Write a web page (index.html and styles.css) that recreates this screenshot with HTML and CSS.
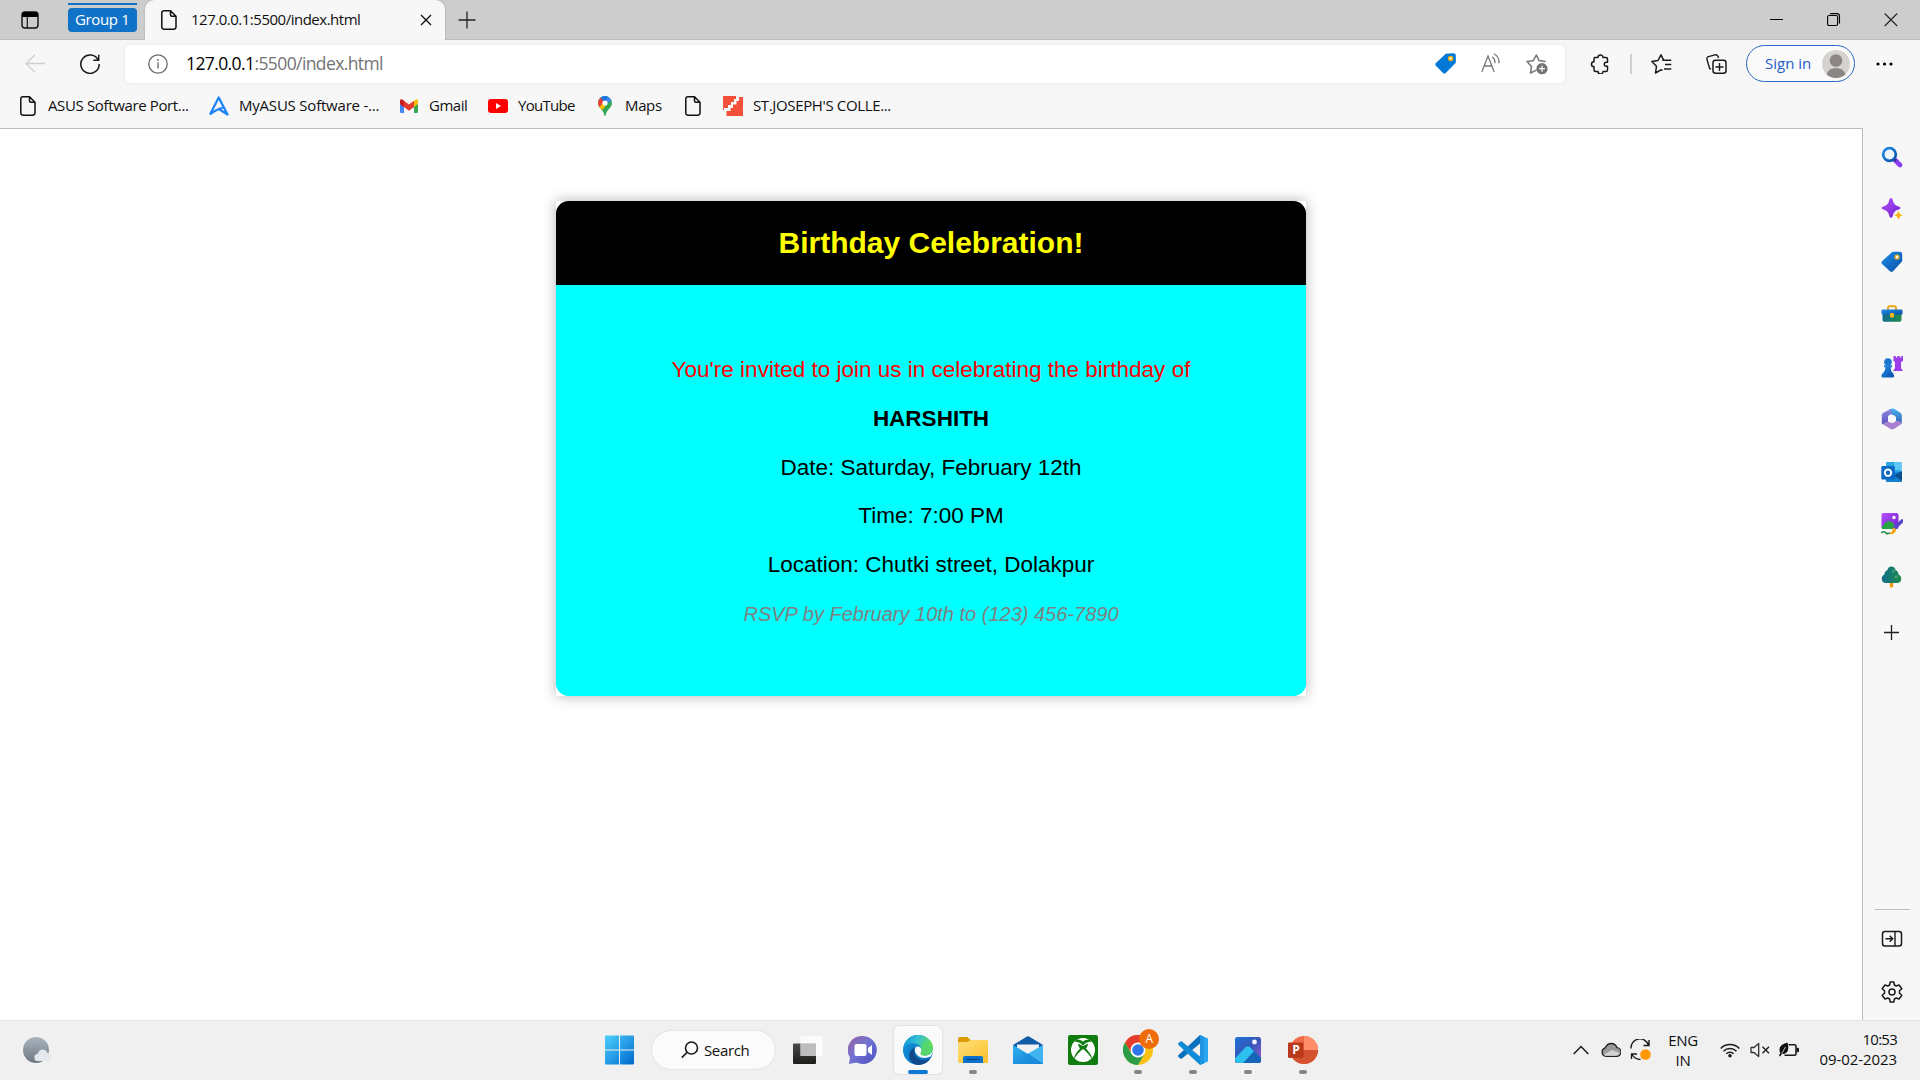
FILE: index.html
```html
<!DOCTYPE html>
<html lang="en">
<head>
<meta charset="utf-8">
<title>127.0.0.1:5500/index.html</title>
<link rel="stylesheet" href="styles.css">
</head>
<body>
<svg width="0" height="0" class="defs" aria-hidden="true">
  <defs>
    <linearGradient id="gBlue" x1="0" y1="0" x2="1" y2="1"><stop offset="0" stop-color="#1f8fe8"/><stop offset="1" stop-color="#0b4ea8"/></linearGradient>
    <linearGradient id="gWin" x1="0" y1="0" x2="1" y2="1"><stop offset="0" stop-color="#4cd0fb"/><stop offset="1" stop-color="#0068cf"/></linearGradient>
    <linearGradient id="gPurple" x1="0" y1="0" x2="1" y2="1"><stop offset="0" stop-color="#b84dff"/><stop offset="1" stop-color="#6a22c9"/></linearGradient>
    <linearGradient id="gChat" x1="0" y1="0" x2="1" y2="1"><stop offset="0" stop-color="#9a62a0"/><stop offset=".45" stop-color="#7473d2"/><stop offset="1" stop-color="#4a4fc0"/></linearGradient>
    <linearGradient id="gDark" x1="0" y1="0" x2="0" y2="1"><stop offset="0" stop-color="#4a4a48"/><stop offset="1" stop-color="#1d1d1b"/></linearGradient>
    <linearGradient id="gEdgeTop" x1="0" y1="0" x2="1" y2=".3"><stop offset="0" stop-color="#0c8fd8"/><stop offset=".5" stop-color="#35c1d2"/><stop offset="1" stop-color="#63df50"/></linearGradient>
    <linearGradient id="gEdgeMid" x1="0" y1="0" x2="1" y2="1"><stop offset="0" stop-color="#1596dc"/><stop offset="1" stop-color="#0669c0"/></linearGradient>
    <linearGradient id="gFolder" x1="0" y1="0" x2="1" y2="1"><stop offset="0" stop-color="#ffe07a"/><stop offset="1" stop-color="#fbbf2a"/></linearGradient>
    <linearGradient id="gMail" x1="0" y1="0" x2="1" y2="1"><stop offset="0" stop-color="#2fb3f0"/><stop offset="1" stop-color="#1477cf"/></linearGradient>
    <linearGradient id="gPhoto" x1="0" y1="0" x2="1" y2="1"><stop offset="0" stop-color="#1a74d4"/><stop offset=".5" stop-color="#3a55b8"/><stop offset="1" stop-color="#9a5ccb"/></linearGradient>
    <linearGradient id="gMoon" x1="0" y1="0" x2="0" y2="1"><stop offset="0" stop-color="#a9b4be"/><stop offset="1" stop-color="#6f7882"/></linearGradient>
    <linearGradient id="gTree" x1="0" y1="0" x2="1" y2="0"><stop offset="0" stop-color="#0d6c8c"/><stop offset="1" stop-color="#218c4c"/></linearGradient>
    <linearGradient id="gOfficeR" x1="0" y1="0" x2="0" y2="1"><stop offset="0" stop-color="#4fb4f0"/><stop offset="1" stop-color="#2a5fae"/></linearGradient>
    <linearGradient id="gOfficeL" x1="0" y1="0" x2="0" y2="1"><stop offset="0" stop-color="#8f8ae0"/><stop offset="1" stop-color="#5b52bd"/></linearGradient>
  </defs>
</svg>

<header class="titlebar">
  <svg class="tab-actions" width="20" height="20" viewBox="0 0 20 20"><rect x="1" y="2" width="16" height="16" rx="3" fill="none" stroke="#111" stroke-width="1.4"/><path d="M1 7V5a3 3 0 0 1 3-3h10a3 3 0 0 1 3 3v2z" fill="#000"/><path d="M6.3 7v11" stroke="#111" stroke-width="1.2"/></svg>
  <div class="group"><span class="group-label">Group 1</span></div>
  <div class="tab">
    <svg width="16" height="20" viewBox="0 0 16 20"><path d="M3 .8h6.500L15 6.200V17a2.200 2.200 0 0 1-2.200 2.200H3A2.200 2.200 0 0 1 .8 17V3A2.200 2.200 0 0 1 3 .8zM9.500.8v4a1.500 1.500 0 0 0 1.500 1.500h4" fill="none" stroke="#111" stroke-width="1.500"/></svg>
    <span class="tab-title">127.0.0.1:5500/index.html</span>
    <svg class="tab-close" width="12" height="12" viewBox="0 0 12 12"><path d="M1 1l10 10M11 1L1 11" stroke="#111" stroke-width="1.4"/></svg>
  </div>
  <svg class="new-tab" width="18" height="18" viewBox="0 0 18 18"><path d="M9 .5v17M.5 9h17" stroke="#222" stroke-width="1.3"/></svg>
  <div class="window-controls">
    <svg width="14" height="14" viewBox="0 0 14 14"><path d="M0 6.500h13" stroke="#000"/></svg>
    <svg width="14" height="14" viewBox="0 0 14 14"><rect x=".6" y="2.500" width="10" height="10" rx="1.500" fill="none" stroke="#000" stroke-width="1.100"/><path d="M3 .6h7A2.500 2.500 0 0 1 12.500 3v7.500" fill="none" stroke="#000" stroke-width="1.100"/></svg>
    <svg width="14" height="14" viewBox="0 0 14 14"><path d="M.7.5l12.500 12.500M13.200.5L.7 13" stroke="#222" stroke-width="1.100"/></svg>
  </div>
</header>

<nav class="toolbar">
  <svg class="back" width="20" height="20" viewBox="0 0 20 20"><path d="M20 9.500H1M10 .8L1 9.500l9 8.700" fill="none" stroke="#cfcfcf" stroke-width="1.300"/></svg>
  <svg class="reload" width="20" height="20" viewBox="0 0 20 20"><path d="M18.300 6.200A9.200 9.200 0 1 0 19.200 10M18.700.8v5.400h-5.400" fill="none" stroke="#1a1a1a" stroke-width="1.500"/></svg>
  <div class="address">
    <svg width="20" height="20" viewBox="0 0 20 20"><circle cx="10" cy="10" r="9.200" fill="none" stroke="#6a6a6a" stroke-width="1.300"/><path d="M10 8.500v6" stroke="#6a6a6a" stroke-width="1.400"/><circle cx="10" cy="6" r=".9" fill="#6a6a6a"/></svg>
    <span class="url"><b>127.0.0.1</b>:5500/index.html</span>
    <div class="address-actions">
      <svg width="21" height="21" viewBox="0 0 21 21"><path d="M10.800.8 18.500.3Q20.800.3 20.800 2.500V9.800L10.700 19.900Q9.300 21 8 19.900L.9 12.800Q-.4 11.500.9 10z" fill="#0078d7"/><circle cx="15.600" cy="5.600" r="2" fill="#fff3c4" stroke="#f0ae0c" stroke-width="1.500"/></svg>
      <svg width="20" height="20" viewBox="0 0 20 20"><path d="M1 18.500 7 3l6 15.500M3.200 13h7.600M11.500 4.300Q14 6 14 9.500M13.300 1Q18.300 3.700 18 9.800" fill="none" stroke="#777" stroke-width="1.300" stroke-linecap="round"/></svg>
      <svg width="22" height="22" viewBox="0 0 22 22"><path d="M10 17.300 4.500 20l1-6.500L1 8.500l6.200-.8L10.300 2l2.800 5.600 6 .9" fill="none" stroke="#757575" stroke-width="1.500" stroke-linejoin="round" stroke-linecap="round"/><circle cx="16" cy="15.700" r="5.600" fill="#737373"/><path d="M16 12.700v6M13 15.700h6" stroke="#fff" stroke-width="1.300"/></svg>
    </div>
  </div>
  <svg class="extensions" width="20" height="20" viewBox="0 0 20 20"><path d="M4.500 3.500H8a2.500 2.500 0 0 1 5 0h3q1.500 0 1.500 1.500v3.200h-1.200a2 2 0 0 0 0 4h1.200V16q0 1.500-1.500 1.500h-3a2.500 2.500 0 0 1-5 0H5.500Q4 17.500 4 16v-3.300a2.500 2.500 0 0 1 0-5V5z" fill="none" stroke="#1a1a1a" stroke-width="1.500" stroke-linejoin="round"/></svg>
  <i class="divider"></i>
  <svg class="favorites" width="21" height="20" viewBox="0 0 21 20"><path d="M11.300 6.200h9M14 10.500h6.300M13 15h7.300M11.500 16.500 10 15.800 4.500 19l1-6.800L.8 7.500l6.200-1 3-5.700 2.600 5.400" fill="none" stroke="#1a1a1a" stroke-width="1.500" stroke-linejoin="round"/></svg>
  <svg class="collections" width="21" height="21" viewBox="0 0 21 21"><path d="M5 15.200 3.600 14.500 1 5.500a2.200 2.200 0 0 1 1.500-2.800L9 .9q2-.5 3 1.400l.5 1.700" fill="none" stroke="#1a1a1a" stroke-width="1.400"/><rect x="7" y="6.200" width="13" height="13" rx="2.500" fill="none" stroke="#1a1a1a" stroke-width="1.500"/><path d="M13.500 9v8M9.500 13h8" stroke="#1a1a1a" stroke-width="1.400"/></svg>
  <div class="signin"><span>Sign in</span><svg width="28" height="28" viewBox="0 0 28 28"><circle cx="14" cy="14" r="14" fill="#d6d2ce"/><circle cx="14" cy="10.500" r="6.300" fill="#8b8683"/><path d="M4.500 24.200Q7 18 14 18t9.500 6.200A14 14 0 0 1 4.500 24.200z" fill="#8b8683"/></svg></div>
  <svg class="more" width="18" height="4" viewBox="0 0 18 4"><circle cx="2" cy="2" r="1.600"/><circle cx="8.500" cy="2" r="1.600"/><circle cx="15" cy="2" r="1.600"/></svg>
</nav>

<nav class="bookmarks">
  <a class="bm bm-asus"><svg width="16" height="20" viewBox="0 0 16 20"><path d="M3 .8h6.500L15 6.200V17a2.200 2.200 0 0 1-2.200 2.200H3A2.200 2.200 0 0 1 .8 17V3A2.200 2.200 0 0 1 3 .8zM9.500.8v4a1.500 1.500 0 0 0 1.500 1.500h4" fill="none" stroke="#111" stroke-width="1.500"/></svg><span>ASUS Software Port...</span></a>
  <a class="bm bm-my"><svg width="20" height="20" viewBox="0 0 20 20"><path d="M1 18.500 9.700 1.500 18.500 18.500 9 12.500M1 18.500Q6 14 14 11.500" fill="none" stroke="#1f86f8" stroke-width="2.300" stroke-linejoin="round"/></svg><span>MyASUS Software -...</span></a>
  <a class="bm bm-gmail"><svg width="18" height="14" viewBox="0 0 18 14"><path d="M0 2.500 4 5v9H1.200Q0 14 0 12.800z" fill="#4285f4"/><path d="M18 2.500 14 5v9h2.800q1.200 0 1.200-1.200z" fill="#34a853"/><path d="M14 2 16 .4Q18 0 18 2v3l-4 3z" fill="#fbbc04"/><path d="M0 2Q0-.2 2.300.5L9 5.500 14 1.800V8L9 11.700 4 8 0 5z" fill="#e33b2e"/><path d="M0 2v3l4 3V2L2 .5Q0 .2 0 2z" fill="#c5221f"/></svg><span>Gmail</span></a>
  <a class="bm bm-yt"><svg width="20" height="14" viewBox="0 0 20 14"><rect width="20" height="14" rx="3" fill="#f00"/><path d="M8 4l5 3-5 3z" fill="#fff"/></svg><span>YouTube</span></a>
  <a class="bm bm-maps"><svg width="14" height="20" viewBox="0 0 14 20"><clipPath id="pin"><path d="M7 0a7 7 0 0 1 7 7c0 5-5.500 6.500-6.200 12q-.8 2-1.600 0C5.500 13.500 0 12 0 7a7 7 0 0 1 7-7z"/></clipPath><g clip-path="url(#pin)"><path d="M0 0h14v20H0z" fill="#34a853"/><path d="M0 5 7 7 12-1H2z" fill="#1a73e8"/><path d="M10 0 14 5 7 8z" fill="#4285f4"/><path d="M-1 4 2.500 1.500 7 7 1.500 11-1 9z" fill="#ea4335"/><path d="M1 11.500 7 5v6l-4 4z" fill="#fbbc04"/></g><circle cx="7" cy="7" r="2.600" fill="#fff"/></svg><span>Maps</span></a>
  <a class="bm bm-page"><svg width="16" height="20" viewBox="0 0 16 20"><path d="M3 .8h6.500L15 6.200V17a2.200 2.200 0 0 1-2.200 2.200H3A2.200 2.200 0 0 1 .8 17V3A2.200 2.200 0 0 1 3 .8zM9.500.8v4a1.500 1.500 0 0 0 1.500 1.500h4" fill="none" stroke="#111" stroke-width="1.500"/></svg></a>
  <a class="bm bm-st"><svg width="20" height="20" viewBox="0 0 20 20"><path d="M0 0h20v20H0z" fill="#f5503a"/><path d="M0 16.500V14h1v-2h4V9h3V6h3V3h2V0h7v1h-4v4h-2.500v3.500H10v3.500H7.500v3H3.500v5H0z" fill="#f7f7f7"/></svg><span>ST.JOSEPH'S COLLE...</span></a>
</nav>

<div class="window-body">
  <main class="page">
    <section class="card">
      <h1 class="card-title">Birthday Celebration!</h1>
      <div class="card-body">
        <p class="invite">You're invited to join us in celebrating the birthday of</p>
        <p class="name">HARSHITH</p>
        <p>Date: Saturday, February 12th</p>
        <p>Time: 7:00 PM</p>
        <p>Location: Chutki street, Dolakpur</p>
        <p class="rsvp">RSVP by February 10th to (123) 456-7890</p>
      </div>
    </section>
  </main>
  <aside class="sidebar">
    <svg viewBox="0 0 22 22"><path d="M13.500 13.500 19 19" stroke="#8a3ff0" stroke-width="4.600" stroke-linecap="round"/><path d="M12.500 12.500 15 15" stroke="#4a2a80" stroke-width="3"/><circle cx="8.500" cy="8.500" r="6.300" fill="#eef6fd" stroke="url(#gBlue)" stroke-width="2.700"/></svg>
    <svg viewBox="0 0 22 22"><path d="M10 0q1.500 0 2 3 .8 4 5 5.300 2.500.7 2.500 1.700t-2.500 1.700Q12.800 13 12 17q-.5 3-2 3t-2-3Q7.200 13 3 11.700.5 11 .5 10T3 8.300Q7.200 7 8 3q.5-3 2-3z" fill="url(#gPurple)"/><path d="M17.500 12.500q.8 4 4.500 4.800-3.700.8-4.500 4.700-.8-3.900-4.500-4.700 3.700-.8 4.500-4.800z" fill="#f9b417"/></svg>
    <svg viewBox="0 0 22 22"><path d="M11.500.8h7.200q2.500 0 2.500 2.500v7L12 20.300q-1.500 1.500-3 0L1 13q-1-1.300.2-3z" fill="url(#gBlue)"/><circle cx="16" cy="6" r="1.900" fill="#fff" stroke="#f2b61c" stroke-width="1.400"/></svg>
    <svg viewBox="0 0 22 22"><path d="M7 7V4.800q0-1.600 1.600-1.600h4.800q1.600 0 1.600 1.600V7" fill="none" stroke="#eba81a" stroke-width="2"/><path d="M1.500 9h19v8q0 1.800-1.800 1.800H3.300q-1.800 0-1.800-1.800z" fill="url(#gTree)"/><rect x=".5" y="6.500" width="21" height="5" rx="1" fill="url(#gBlue)"/><rect x="9" y="10" width="4" height="4.500" rx="1" fill="#f2b722"/></svg>
    <svg viewBox="0 0 22 22"><path d="M12.500 0h2.300v1.600h1.600V0h2.400v1.600h1.500V0H22v5l-2 1v6l2 3H12l2-3V6l-1.500-1z" fill="#9a3eea"/><circle cx="7" cy="6" r="3.800" fill="#1976d0"/><path d="M3 9.200h8v2H9.500q0 4 3 6.800 1.500 3.500-.5 3.500H1.500Q-.5 21 1 18q3.500-3 3.500-6.800H3z" fill="url(#gBlue)"/></svg>
    <svg viewBox="0 0 22 22"><path d="M8.500 1.500Q11-.3 13 .8l6.500 4q1.300 1 1.300 2.500V15q0 1-1.500 1.500L15 14V9L8 5z" fill="url(#gOfficeR)"/><path d="M20.800 14q0 1.800-1.500 2.700l-6 4q-2 1.200-4 0l-7-4.200L8 13.500l3 1.500 4.500-2.500z" fill="#a980d0"/><path d="M9.500 1 11 5.500 7 8v6l-5.500 2.500Q.8 16 .8 15V7.500q0-1.800 1.500-2.700z" fill="url(#gOfficeL)"/><circle cx="11" cy="10.800" r="3.900" fill="#f7f7f7"/></svg>
    <svg viewBox="0 0 22 22"><rect x="5" y="1" width="15.500" height="17" rx="1" fill="#2ba4e8"/><path d="M13 1h7.500v8H13z" fill="#5cc8f5"/><path d="M5 11.500 21 11v9q0 1-1 1H6q-1 0-1-1z" fill="#1580d0"/><path d="M13 14.500 21 10v10z" fill="#0b4d91"/><rect x=".3" y="5" width="13.500" height="13.500" rx="1.300" fill="#0b6ac4"/><circle cx="7" cy="11.700" r="3.200" fill="none" stroke="#fff" stroke-width="1.900"/></svg>
    <svg viewBox="0 0 22 22"><rect x=".5" y="0" width="17" height="16" rx="2" fill="url(#gPurple)"/><circle cx="13" cy="4.500" r="1.700" fill="#fff"/><path d="M1 14Q8 2 15 14l-2 2H1z" fill="#27a443"/><path d="M0 20q3-2.500 5 0 2 1.500 4-.5" fill="none" stroke="#1f8a4a" stroke-width="1.600"/><path d="M13.500 15 21 8" stroke="#5a45cf" stroke-width="3.600" stroke-linecap="round"/><path d="M12 14.500q3 .5 3 3-1 4-7 4 3-2 4-7z" fill="#f6a821"/></svg>
    <svg viewBox="0 0 22 22"><rect x="8.800" y="15" width="3.400" height="6.500" rx="1" fill="#f09c12"/><path d="M10.500.5q3.500 0 4 3.500 3 1 3 4.500 3 1.500 2.700 4.500-.2 4-4.200 4H5q-4 0-4.200-4-.3-3 2.700-4.500Q3.500 5 6.500 4q.5-3.500 4-3.500z" fill="url(#gTree)"/><circle cx="12.500" cy="5" r="1.500" fill="#5fb98a" opacity=".6"/><circle cx="15" cy="11" r="1.500" fill="#5fb98a" opacity=".6"/></svg>
    <svg class="side-add" viewBox="0 0 22 22"><path d="M10.500 3v15M3 10.500h15" stroke="#222" stroke-width="1.300"/></svg>
    <div class="side-bottom">
      <svg viewBox="0 0 22 22"><rect x="1.500" y="3.500" width="19" height="14.500" rx="2.500" fill="none" stroke="#1a1a1a" stroke-width="1.500"/><path d="M14 3.500V18M4.500 10.800h7M8.700 7.800l3 3-3 3" fill="none" stroke="#1a1a1a" stroke-width="1.400"/></svg>
      <svg viewBox="0 0 22 22"><path d="M9.200 1h3.600l.6 3 1.700 1 2.900-1 2.800 3.800-2.300 2v2.400l2.300 2-2.800 3.800-2.900-1-1.700 1-.6 3H9.200l-.6-3-1.700-1-2.900 1-2.800-3.800 2.300-2V9.800l-2.300-2L4 4l2.900 1 1.700-1z" fill="none" stroke="#1a1a1a" stroke-width="1.500" stroke-linejoin="round"/><circle cx="11" cy="11" r="3" fill="none" stroke="#1a1a1a" stroke-width="1.500"/></svg>
    </div>
  </aside>
</div>

<footer class="taskbar">
  <div class="weather"><svg width="30" height="30" viewBox="0 0 30 30"><circle cx="13" cy="15" r="13" fill="url(#gMoon)"/><path d="M15 26a3.500 3.500 0 0 1-.3-7q1-4.500 5-4.500 3.500 0 4.800 3.500a4 4 0 0 1 .5 8z" fill="#e4e8ec"/></svg></div>
  <div class="apps">
    <div class="app start"><svg width="30" height="30" viewBox="0 0 30 30"><path d="M0 1.500Q0 .5 1 .5h13v14H0zM15 .5h13q1 0 1 1v13H15zM0 15.500h14v14H1q-1 0-1-1zM15 15.500h14v13q0 1-1 1H15z" fill="url(#gWin)"/></svg></div>
    <div class="search"><svg width="18" height="18" viewBox="0 0 18 18"><circle cx="10.500" cy="7" r="6" fill="none" stroke="#1a1a1a" stroke-width="1.600"/><path d="M6 11.500.8 16.700" stroke="#1a1a1a" stroke-width="1.700"/></svg><span>Search</span></div>
    <div class="app"><svg width="30" height="30" viewBox="0 0 30 30"><rect x="0" y="8.500" width="23" height="20.500" rx="1" fill="url(#gDark)"/><rect x="7.500" y="1" width="22.500" height="20" rx="1" fill="#fff" opacity=".72"/><rect x="7.500" y="8.500" width="15.500" height="12.500" fill="#bdbdbd"/></svg></div>
    <div class="app"><svg width="30" height="30" viewBox="0 0 30 30"><path d="M15 1a14 14 0 1 1-6.500 26.500L1 29l1-6.500A14 14 0 0 1 15 1z" fill="url(#gChat)"/><rect x="6.500" y="9" width="12" height="12" rx="2" fill="#fff"/><path d="M20 13l4-3v10l-4-3z" fill="#fff"/></svg></div>
    <div class="app active"><svg width="30" height="30" viewBox="0 0 30 30"><circle cx="15" cy="15" r="15" fill="url(#gEdgeMid)"/><path d="M.3 13C2 4 8.500 0 15 0c9 0 15 6.500 15 13 0 5-4 7.500-8 7.500-3.500 0-5.200-1.400-4-3 1.500-2 1-6.500-4-8.500C8 7 2.500 9 .3 13z" fill="url(#gEdgeTop)"/><path d="M11.500 12.500c-2 8 4 14 12 12.500 2-.5 3.500-1.500 4.300-2.500C26 27 20.500 30 15 30 8 29 5 23 6.500 18q1.500-4 5-5.500z" fill="#114a8b"/><path d="M30 13c0 5-4 7.500-8 7.500-3.500 0-5.200-1.400-4-3 .7-1 .8-2.300.2-3.700-1-2-3.200-2.800-5.200-1.800-2.500 2-1 8.500 5 10.500 4 1 7 0 9.800-1.300L30 17z" fill="#fafafa"/><path d="M30 13c0 5-4 7.500-8 7.500-3.500 0-5.200-1.400-4-3 .8-1.500.8-3-.2-4.500L22 6z" fill="#55d76c"/></svg></div>
    <div class="app open"><svg width="30" height="30" viewBox="0 0 30 30"><path d="M0 4Q0 2 2 2h7.500L13 5.500V12H0z" fill="#dd9b07"/><path d="M0 8.500Q0 7 1.500 7H9l4-2h15.500Q30 5 30 6.500v20q0 1.500-1.500 1.500h-27Q0 28 0 26.500z" fill="url(#gFolder)"/><path d="M5 28v-5q0-2 2-2h16q2 0 2 2v5z" fill="#0b72cc"/><path d="M8.500 24.500h13" stroke="#084a88" stroke-width="1.200"/></svg></div>
    <div class="app"><svg width="30" height="30" viewBox="0 0 30 30"><path d="M0 10 13.500 1.700Q15 .8 16.500 1.700L30 10v4H0z" fill="#0f5ba8"/><path d="M4 9.500h22v10H4z" fill="#f2f2f2"/><path d="M0 10 15 19 30 10v19H0z" fill="url(#gMail)"/><path d="M15 18.500 30 10v19z" fill="#4cc3f7" opacity=".75"/><path d="M0 29 15 18.500 30 29z" fill="#1d8fdf" opacity=".6"/></svg></div>
    <div class="app"><svg width="30" height="30" viewBox="0 0 30 30"><rect width="30" height="30" rx="2" fill="#107c10"/><circle cx="15" cy="15" r="12" fill="#fff"/><path d="M8 4.500q4-.5 7 2 3-2.500 7-2L23 7q-4-1-8 3.500Q11 6 7 7z" fill="#107c10"/><path d="M10 8.500 15 11l5-2.500q0 3-2 5 6.500 7 6 11-3-6-9-10.500Q9 18.500 6 24.500q-.5-4 6-11-2-2-2-5z" fill="#107c10"/></svg></div>
    <div class="app open chrome"><svg width="30" height="30" viewBox="0 0 30 30"><circle cx="15" cy="15" r="15" fill="#fbc116"/><path d="M2 7.500A15 15 0 0 1 28 7.500H15L9 19z" fill="#e33b2e"/><path d="M2 7.500 8.500 18.700 15 22.500 21.500 18.700 15 30A15 15 0 0 1 2 7.500z" fill="#2a9d48"/><circle cx="15" cy="15" r="7.500" fill="#fff"/><circle cx="15" cy="15" r="5.800" fill="#2f76ea"/></svg><span class="badge">A</span></div>
    <div class="app open"><svg width="30" height="30" viewBox="0 0 30 30"><path d="M22 0 30 3.500v23L22 30z" fill="#2aa5f2"/><path d="M22 0v8.500L4 23.500Q3 24 2 23.300L.5 22q-.9-1 0-2z" fill="#0b70bd"/><path d="M22 30v-8.500L4 6.500Q3 6 2 6.700L.5 8q-.9 1 0 2z" fill="#118bd8"/><path d="M22 0 22 30 26 28.500V2z" fill="#1f95e2"/></svg></div>
    <div class="app open"><svg width="26" height="26" viewBox="0 0 26 26"><rect width="26" height="26" rx="2.500" fill="url(#gPhoto)"/><path d="M2 26q-2-.5-2-3L10.500 10q2.500-2.500 5 0L26 21v2.500q0 2.500-2.500 2.500z" fill="#1566b8"/><path d="M1 25Q0 24 0 21.500L10.500 10.300q2.500-2 4.500 0l4 4L8 26H2.500z" fill="#2fc0f2"/><circle cx="19.500" cy="5" r="2.400" fill="#f2f4ff"/></svg></div>
    <div class="app open"><svg width="30" height="30" viewBox="0 0 30 30"><circle cx="16" cy="15" r="14" fill="#ef6a48"/><path d="M16 1a14 14 0 0 1 14 14H16z" fill="#ff8f6b"/><path d="M2 15h28a14 14 0 0 1-28 0z" fill="#d35230"/><rect x="0" y="7.500" width="15.500" height="15.500" rx="1.200" fill="#b8391b"/><text x="7.900" y="19.200" class="ppt-letter">P</text></svg></div>
  </div>
  <div class="tray">
    <svg class="chev" width="16" height="10" viewBox="0 0 16 10"><path d="M.7 9 8 1.500 15.300 9" fill="none" stroke="#1a1a1a" stroke-width="1.500"/></svg>
    <svg class="cloud" width="20" height="16" viewBox="0 0 20 16"><path d="M5 14.300a4.300 4.300 0 0 1-.8-8.400Q6 1.500 10.300 1.500q4.200 0 5.600 4.200A4.300 4.300 0 0 1 15.500 14.300z" fill="#9a9a9a" stroke="#222" stroke-width="1.300"/><path d="M2.500 13 11 8l7.500 3q-1 2.700-3.500 2.700H4.500z" fill="#d2d2d2"/></svg>
    <svg class="sync" width="21" height="22" viewBox="0 0 21 22"><path d="M1 9.500A9 9 0 0 1 18.500 6M19 1v5.500h-5.500M1.500 20v-5H7M2 15.500Q5 20.500 10.500 20.500" fill="none" stroke="#1a1a1a" stroke-width="1.400"/><circle cx="15.500" cy="15.500" r="5.300" fill="#ff9800"/></svg>
    <div class="lang"><span class="eng">ENG</span><span>IN</span></div>
    <svg class="wifi" width="20" height="16" viewBox="0 0 20 16"><path d="M.7 6.500a13 13 0 0 1 18.600 0M3.500 9.200a9.200 9.200 0 0 1 13 0M6.300 11.800a5.200 5.200 0 0 1 7.400 0" fill="none" stroke="#1a1a1a" stroke-width="1.500"/><circle cx="10" cy="13.700" r="1.800" fill="#1a1a1a"/></svg>
    <svg class="vol" width="20" height="16" viewBox="0 0 20 16"><path d="M1 5.500h3L8.700 1.500v13L4 10.500H1z" fill="none" stroke="#333" stroke-width="1.300" stroke-linejoin="round"/><path d="M12.500 4.800l6.500 6.500M19 4.800l-6.500 6.500" stroke="#1a1a1a" stroke-width="1.300"/></svg>
    <svg class="bat" width="21" height="16" viewBox="0 0 21 16"><path d="M9.500 2.800h6q1.500 0 1.500 1.500v7.400q0 1.500-1.500 1.500H5.500" fill="none" stroke="#1a1a1a" stroke-width="1.600"/><rect x="17.500" y="5.700" width="2.500" height="4.500" rx="1" fill="#1a1a1a"/><path d="M8.500.5Q10.500 8 7.500 10.500 5.500 12.500 3 12L1 14.500 0 13.700 1.200 11Q-2 3 8.500.5z" fill="#111"/><path d="M2.500 12 6.500 5" stroke="#eee" stroke-width=".8"/></svg>
    <div class="clock"><span class="time">10:53</span><span class="date">09-02-2023</span></div>
  </div>
</footer>
</body>
</html>
```
FILE: styles.css
```css
* { box-sizing: border-box; }
body {
  margin: 0;
  width: 1920px;
  height: 1080px;
  overflow: hidden;
  display: flex;
  flex-direction: column;
  background: #fff;
  color: #111;
  font: 15px/20px "Open Sans", sans-serif;
  letter-spacing: -0.36px;
  white-space: nowrap;
}
svg { display: block; flex: none; }
.defs { position: absolute; }

.titlebar {
  flex: none;
  height: 40px;
  padding: 0 22px 0 21px;
  display: flex;
  background: #cdcdcd;
  border-bottom: 1px solid #bdbdbd;
}
.tab-actions { margin-top: 10px; }
.group {
  width: 69px;
  height: 32px;
  margin: 0 8px 0 27px;
  padding-top: 3px;
}
.group::before {
  content: "";
  display: block;
  height: 2px;
  margin-bottom: 3px;
  background: #1173c7;
}
.group-label {
  display: block;
  height: 24px;
  padding-left: 7px;
  line-height: 23px;
  border-radius: 4px;
  background: #1173c7;
  color: #fff;
}
.tab {
  width: 300px;
  height: 41px;
  padding: 0 13px 1px 16px;
  display: flex;
  align-items: center;
  background: #f7f7f7;
  border-radius: 9px 9px 0 0;
  box-shadow: 0 0 2px rgba(0, 0, 0, .25);
  clip-path: inset(0 -3px 0 -3px);
}
.tab-title { margin-left: 14px; padding-bottom: 2px; letter-spacing: -0.49px; }
.tab-close { margin-left: auto; }
.new-tab { margin: 11px 0 0 13px; }
.window-controls {
  margin: 13px 0 0 auto;
  display: flex;
  gap: 43px;
}

.toolbar {
  flex: none;
  height: 46px;
  padding: 5px 0 0 25px;
  display: flex;
  align-items: flex-start;
  background: #f7f7f7;
}
.back, .reload, .extensions, .favorites, .collections { margin-top: 9px; }
.reload { margin-left: 35px; }
.address {
  width: 1440px;
  height: 38px;
  margin-left: 25px;
  padding: 0 17px 0 23px;
  display: flex;
  align-items: center;
  background: #fff;
  border-radius: 5px;
  box-shadow: 0 0 4px rgba(0, 0, 0, .08);
}
.url {
  margin-left: 18px;
  padding-bottom: 2px;
  font-size: 17.5px;
  letter-spacing: -0.6px;
  color: #737373;
}
.url b { font-weight: 400; color: #000; }
.address-actions { margin-left: auto; display: flex; gap: 25px; }
.extensions { margin-left: 25px; }
.divider { width: 2px; height: 20px; margin: 9px 0 0 20px; background: #cfcfcf; }
.favorites { margin-left: 19px; }
.collections { margin-left: 34px; }
.signin {
  width: 109px;
  height: 37px;
  margin-left: 19px;
  padding: 0 4px 0 18px;
  display: flex;
  align-items: center;
  justify-content: space-between;
  border: 1.5px solid #2a67c4;
  border-radius: 19px;
  background: #fafafa;
  color: #1f5fc4;
  letter-spacing: 0;
}
.signin span { padding-bottom: 1px; }
.more { margin: 17px 0 0 21px; }

.bookmarks {
  flex: none;
  height: 42px;
  padding: 0 0 2px 20px;
  display: flex;
  align-items: flex-start;
  background: #f7f7f7;
}
.bm { display: flex; align-items: center; gap: 10px; height: 40px; }
.bm span { padding-bottom: 2px; }
.bm-asus { width: 189px; gap: 12px; }
.bm-my { width: 191px; letter-spacing: -0.21px; }
.bm-gmail { width: 88px; gap: 11px; letter-spacing: -0.48px; }
.bm-yt { width: 110px; letter-spacing: -0.71px; }
.bm-maps { width: 87px; gap: 13px; }
.bm-page { width: 38px; }

.window-body { flex: 1; min-height: 0; display: flex; background: #f7f7f7; }
.page {
  width: 1863px;
  padding-top: 72.300px;
  background: #fff;
  border: solid #bdbdbd;
  border-width: 1px 1px 0 0;
}
.card {
  width: 750px;
  height: 495px;
  margin: 0 0 0 556px;
  box-shadow: 0 0 12.5px rgba(0, 0, 0, .3);
  background: #fff;
  font: 22.5px/26px "Liberation Sans", Arial, sans-serif;
  letter-spacing: 0;
  text-align: center;
  color: #000;
}
.card-title {
  height: 84px;
  margin: 0;
  border-radius: 12.5px 12.5px 0 0;
  background: #000;
  color: #ff0;
  font-size: 30px;
  line-height: 84px;
}
.card-body {
  height: 411px;
  padding-top: 49.600px;
  border-radius: 0 0 12.5px 12.5px;
  background: #0ff;
}
.card-body p { margin: 22.600px 0; }
.card-body .invite { color: #f00; }
.card-body .name { font-weight: 700; }
.card-body .rsvp { margin-top: 23.400px; font-size: 20px; font-style: italic; color: #808080; }

.sidebar {
  width: 57px;
  padding: 17.500px 0 0 17.500px;
  display: flex;
  flex-direction: column;
  gap: 30.5px;
}
.sidebar svg { width: 22px; height: 22px; }
.side-add { margin-top: 4px; }
.side-bottom {
  width: 35px;
  height: 111px;
  margin: auto 0 0 -6px;
  padding: 18px 0 0 6px;
  display: flex;
  flex-direction: column;
  gap: 30.5px;
  border-top: 1px solid #bdbdbd;
}

.taskbar {
  flex: none;
  height: 60px;
  padding-bottom: 1px;
  display: flex;
  align-items: center;
  background: #f0f0f0;
  border-top: 1px solid #e2e2e2;
}
.weather { width: 593px; padding-left: 23px; }
.apps { display: flex; align-items: center; }
.app {
  position: relative;
  width: 48px;
  height: 48px;
  margin-right: 7px;
  display: flex;
  align-items: center;
  justify-content: center;
}
.start { width: 54px; margin-right: 5px; }
.search {
  width: 123px;
  height: 38px;
  margin-right: 9px;
  padding-left: 29px;
  display: flex;
  align-items: center;
  gap: 5px;
  border-radius: 19px;
  background: #fbfbfb;
  box-shadow: 0 0 2px rgba(0, 0, 0, .15);
}
.active {
  border-radius: 5px;
  background: #fafafa;
  box-shadow: 0 0 2px rgba(0, 0, 0, .2);
}
.open::after, .active::after {
  content: "";
  position: absolute;
  bottom: 0;
  width: 8px;
  height: 4px;
  border-radius: 2px;
  background: #868686;
}
.active::after { width: 20px; background: #0a78d4; }
.badge {
  position: absolute;
  left: 25px;
  top: 3px;
  width: 20px;
  height: 20px;
  border-radius: 50%;
  background: #ee6c0a;
  color: #fff;
  font-size: 12px;
  line-height: 20px;
  text-align: center;
}
.ppt-letter {
  font: 700 12px "Open Sans", sans-serif;
  letter-spacing: 0;
  text-anchor: middle;
  fill: #fff;
}
.tray { margin-left: auto; padding-right: 23px; display: flex; align-items: center; }
.cloud { margin-left: 12px; }
.sync { margin-left: 9px; }
.lang {
  width: 34px;
  margin-left: 15px;
  padding-bottom: 1px;
  display: flex;
  flex-direction: column;
  align-items: center;
}
.wifi { margin-left: 20px; }
.vol { margin-left: 10px; }
.bat { margin-left: 9px; }
.clock {
  width: 80px;
  margin-left: 17px;
  padding-bottom: 2px;
  display: flex;
  flex-direction: column;
  align-items: flex-end;
  letter-spacing: -0.08px;
}
.time { letter-spacing: -0.75px; }
```
